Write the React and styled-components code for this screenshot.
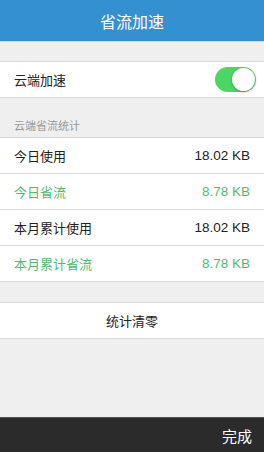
import React, { useState } from "react";
import styled, { createGlobalStyle } from "styled-components";

const GlobalStyle = createGlobalStyle`
  html, body {
    margin: 0;
    padding: 0;
    background: #efefef;
  }
  body {
    font-family: "Noto Sans CJK SC", "Liberation Sans", sans-serif;
  }
`;

const Page = styled.div`
  width: 264px;
  height: 452px;
  display: flex;
  flex-direction: column;
  background: #efefef;
  overflow: hidden;
`;

const Header = styled.div`
  height: 42px;
  background: #3590d1;
  color: #fff;
  font-size: 16px;
  display: flex;
  align-items: center;
  justify-content: center;
  border-bottom: 1px solid #d6d6d6;
  box-sizing: border-box;
`;

const Group = styled.div`
  margin-top: ${(p) => p.gap}px;
  background: #fff;
  border-top: 1px solid #d8d8d8;
  border-bottom: 1px solid #d8d8d8;
`;

const SectionLabel = styled.div`
  padding: 20px 14px 5px;
  font-size: 11px;
  color: #9a9a9a;
  line-height: 14px;
`;

const Row = styled.div`
  height: 35px;
  display: flex;
  align-items: center;
  justify-content: ${(p) => (p.center ? "center" : "space-between")};
  padding: 0 ${(p) => (p.center ? 0 : 14)}px;
  font-size: 13px;
  color: ${(p) => (p.green ? "#4dbd6d" : "#222")};
  & + & {
    border-top: 1px solid #dcdcdc;
  }
`;

const Value = styled.span`
  font-family: "Liberation Sans", "Noto Sans CJK SC", sans-serif;
  font-size: 13.5px;
`;

const Toggle = styled.button`
  width: 41px;
  height: 25px;
  border-radius: 13px;
  border: none;
  padding: 0;
  margin-right: -6px;
  background: ${(p) => (p.on ? "#4cd664" : "#e5e5e5")};
  position: relative;
  cursor: pointer;
  &::after {
    content: "";
    position: absolute;
    top: 1px;
    left: ${(p) => (p.on ? 17 : 1)}px;
    width: 23px;
    height: 23px;
    border-radius: 50%;
    background: #fff;
    box-shadow: 0 1px 3px rgba(0, 0, 0, 0.3);
  }
`;

const Spacer = styled.div`
  flex: 1;
`;

const Footer = styled.div`
  height: 34px;
  background: #2b2b2b;
  border-top: 1px solid #555;
  color: #fff;
  font-size: 15px;
  display: flex;
  align-items: center;
  justify-content: flex-end;
  padding: 0 12px;
`;

export default function App() {
  const [on, setOn] = useState(true);
  return (
    <>
      <GlobalStyle />
      <Page>
        <Header>省流加速</Header>
        <Group gap={19}>
          <Row>
            云端加速
            <Toggle on={on ? 1 : 0} onClick={() => setOn(!on)} />
          </Row>
        </Group>
        <SectionLabel>云端省流统计</SectionLabel>
        <Group gap={0}>
          <Row>
            今日使用<Value>18.02 KB</Value>
          </Row>
          <Row green>
            今日省流<Value>8.78 KB</Value>
          </Row>
          <Row>
            本月累计使用<Value>18.02 KB</Value>
          </Row>
          <Row green>
            本月累计省流<Value>8.78 KB</Value>
          </Row>
        </Group>
        <Group gap={20}>
          <Row center>统计清零</Row>
        </Group>
        <Spacer />
        <Footer>完成</Footer>
      </Page>
    </>
  );
}
